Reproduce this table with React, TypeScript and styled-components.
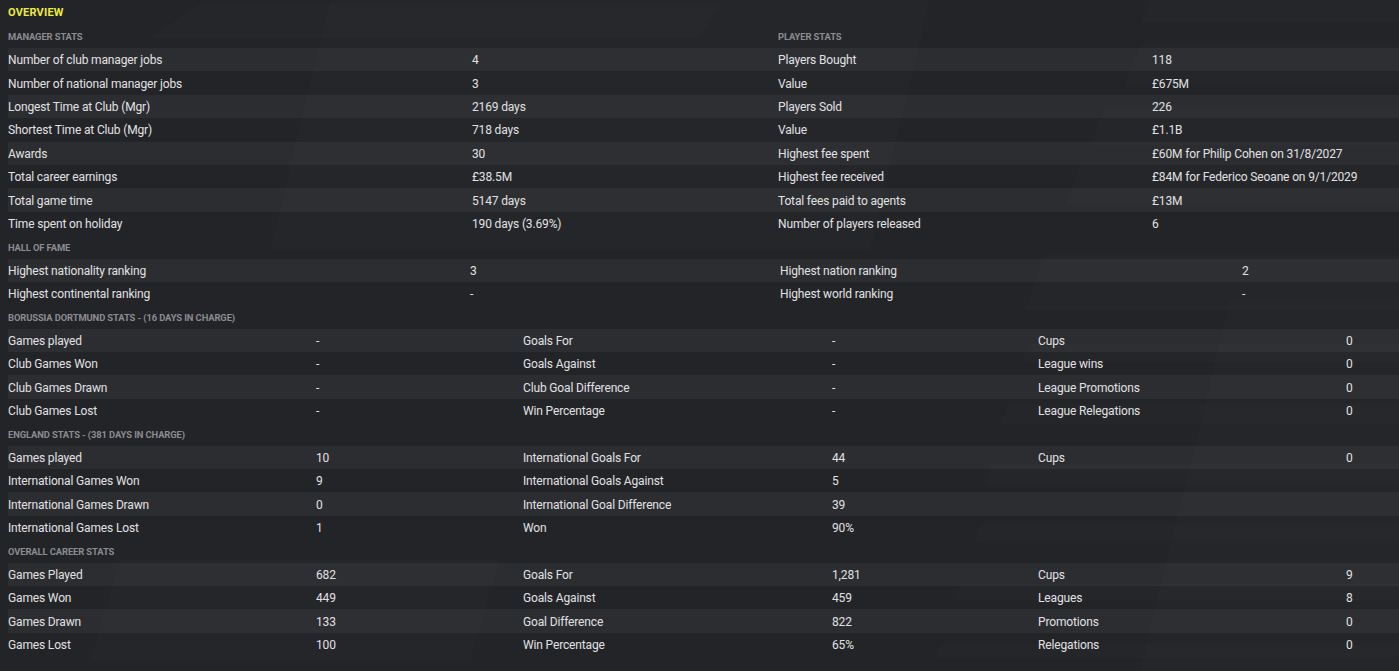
import React from "react";
import styled, { createGlobalStyle } from "styled-components";

const GlobalStyle = createGlobalStyle`
  html, body {
    margin: 0;
    padding: 0;
    background: #232428;
  }
  body {
    font-family: Roboto, "Liberation Sans", sans-serif;
    -webkit-font-smoothing: antialiased;
  }
`;

const Page = styled.div`
  position: relative;
  width: 1399px;
  height: 671px;
  overflow: hidden;
  background: #232428;
`;

const Backdrop = styled.svg`
  position: absolute;
  inset: 0;
  z-index: 0;
  pointer-events: none;
`;

const Content = styled.div`
  position: relative;
  z-index: 1;
  padding-left: 8px;
`;

const Title = styled.div`
  height: 24.6px;
  display: flex;
  align-items: center;
  font-size: 11px;
  font-weight: 700;
  color: #ecec3e;
  letter-spacing: 0.2px;
`;

const Line = styled.div<{ $cols: string; $shaded?: boolean }>`
  display: grid;
  grid-template-columns: ${(p) => p.$cols};
  height: 23.4px;
  align-items: center;
  background: ${(p) => (p.$shaded ? "rgba(255, 255, 255, 0.045)" : "transparent")};
`;

const Heading = styled.span`
  font-size: 9.4px;
  font-weight: 700;
  color: #8b8c91;
  text-transform: uppercase;
  letter-spacing: -0.1px;
  white-space: nowrap;
  padding-top: 1px;
`;

const Cell = styled.span`
  font-size: 12px;
  color: #e1e1e3;
  letter-spacing: -0.15px;
  white-space: nowrap;
  padding-top: 1px;
`;

const TWO = "464px 306px 374px 1fr";
const FAME = "462px 310px 462px 1fr";
const SIX = "308px 207px 309px 206px 308px 1fr";

type Row = string[];

interface SectionProps {
  cols: string;
  headings: string[];
  rows: Row[];
}

function Section({ cols, headings, rows }: SectionProps) {
  return (
    <>
      <Line $cols={cols}>
        {headings.map((h, i) => (
          <Heading key={i}>{h}</Heading>
        ))}
      </Line>
      {rows.map((r, i) => (
        <Line key={i} $cols={cols} $shaded={i % 2 === 0}>
          {r.map((c, j) => (
            <Cell key={j}>{c}</Cell>
          ))}
        </Line>
      ))}
    </>
  );
}

const careerRows: Row[] = [
  ["Number of club manager jobs", "4", "Players Bought", "118"],
  ["Number of national manager jobs", "3", "Value", "£675M"],
  ["Longest Time at Club (Mgr)", "2169 days", "Players Sold", "226"],
  ["Shortest Time at Club (Mgr)", "718 days", "Value", "£1.1B"],
  ["Awards", "30", "Highest fee spent", "£60M for Philip Cohen on 31/8/2027"],
  ["Total career earnings", "£38.5M", "Highest fee received", "£84M for Federico Seoane on 9/1/2029"],
  ["Total game time", "5147 days", "Total fees paid to agents", "£13M"],
  ["Time spent on holiday", "190 days (3.69%)", "Number of players released", "6"],
];

const fameRows: Row[] = [
  ["Highest nationality ranking", "3", "Highest nation ranking", "2"],
  ["Highest continental ranking", "-", "Highest world ranking", "-"],
];

const clubRows: Row[] = [
  ["Games played", "-", "Goals For", "-", "Cups", "0"],
  ["Club Games Won", "-", "Goals Against", "-", "League wins", "0"],
  ["Club Games Drawn", "-", "Club Goal Difference", "-", "League Promotions", "0"],
  ["Club Games Lost", "-", "Win Percentage", "-", "League Relegations", "0"],
];

const nationRows: Row[] = [
  ["Games played", "10", "International Goals For", "44", "Cups", "0"],
  ["International Games Won", "9", "International Goals Against", "5", "", ""],
  ["International Games Drawn", "0", "International Goal Difference", "39", "", ""],
  ["International Games Lost", "1", "Won", "90%", "", ""],
];

const overallRows: Row[] = [
  ["Games Played", "682", "Goals For", "1,281", "Cups", "9"],
  ["Games Won", "449", "Goals Against", "459", "Leagues", "8"],
  ["Games Drawn", "133", "Goal Difference", "822", "Promotions", "0"],
  ["Games Lost", "100", "Win Percentage", "65%", "Relegations", "0"],
];

function Stripes() {
  const f = "rgba(255,255,255,0.013)";
  return (
    <Backdrop width="1399" height="671" viewBox="0 0 1399 671">
      <polygon points="150,38 200,4 720,4 700,38" fill={f} />
      <polygon points="330,0 930,0 870,250 270,250" fill={f} />
      <polygon points="1150,0 1399,0 1399,22 1140,22" fill={f} />
      <polygon points="1140,45 1399,45 1399,85 1125,85" fill={f} />
      <polygon points="1105,105 1399,105 1399,145 1090,145" fill={f} />
      <polygon points="1080,165 1399,165 1399,205 1065,205" fill={f} />
      <polygon points="1045,255 1399,255 1399,310 1025,310" fill={f} />
      <polygon points="1030,344 1500,344 1480,362 1020,362" fill={f} />
      <polygon points="1010,404 1480,404 1470,424 1000,424" fill={f} />
      <polygon points="990,464 1460,464 1455,484 985,484" fill={f} />
      <polygon points="980,524 1440,524 1430,541 975,541" fill={f} />
      <polygon points="960,584 1420,584 1415,600 955,600" fill={f} />
      <polygon points="940,645 1400,645 1395,658 935,658" fill={f} />
      <polygon points="120,560 500,560 470,660 90,660" fill={f} />
      <polygon points="1230,300 1399,300 1399,671 1140,671" fill={f} />
    </Backdrop>
  );
}

export default function App() {
  return (
    <Page>
      <GlobalStyle />
      <Stripes />
      <Content>
        <Title>OVERVIEW</Title>
        <Section cols={TWO} headings={["Manager Stats", "", "Player Stats"]} rows={careerRows} />
        <Section cols={FAME} headings={["Hall of Fame"]} rows={fameRows} />
        <Section cols={SIX} headings={["Borussia Dortmund Stats - (16 Days in Charge)"]} rows={clubRows} />
        <Section cols={SIX} headings={["England Stats - (381 Days in Charge)"]} rows={nationRows} />
        <Section cols={SIX} headings={["Overall Career Stats"]} rows={overallRows} />
      </Content>
    </Page>
  );
}
